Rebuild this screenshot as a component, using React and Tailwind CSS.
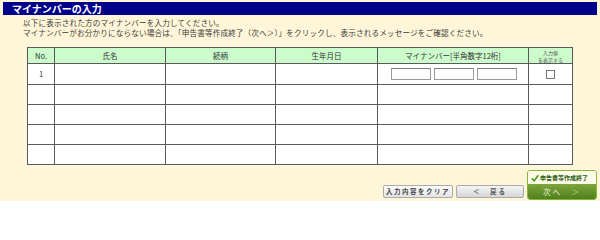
import React from "react";

const font = { fontFamily: '"Noto Sans CJK JP", "Noto Sans", sans-serif' };

function NumberInput() {
  return <input type="text" className="w-[40px] h-[12px] bg-white border border-[#9a9a9a] border-t-[#7a7a7a] outline-none" />;
}

export default function App() {
  const rows = [1, 2, 3, 4, 5];

  return (
    <div className="w-[600px] h-[201px] bg-[#fff6d9] text-[#333] overflow-hidden" style={font}>
      <div className="pt-[2px] px-[3px]">
        <div className="h-[13px] bg-[#00008b] text-white text-[10px] font-bold leading-[13px] pl-[9px]">
          マイナンバーの入力
        </div>
      </div>

      <div className="pl-[23px] mt-[3px] text-[7.6px] leading-[9.5px] tracking-[0.15px] text-[#3a3a3a]">
        <p>以下に表示された方のマイナンバーを入力してください。</p>
        <p>マイナンバーがお分かりにならない場合は、「申告書等作成終了（次へ＞）」をクリックし、表示されるメッセージをご確認ください。</p>
      </div>

      <table className="ml-[27px] mt-[10px] w-[545px] border-collapse table-fixed bg-white text-[7.5px] text-[#333]">
        <colgroup>
          <col className="w-[27px]" />
          <col className="w-[111px]" />
          <col className="w-[110px]" />
          <col className="w-[102px]" />
          <col className="w-[151px]" />
          <col className="w-[44px]" />
        </colgroup>
        <thead>
          <tr className="h-[16px] bg-[#ccfccc]">
            <th className="border border-[#5a5a5a] font-normal">No.</th>
            <th className="border border-[#5a5a5a] font-normal">氏名</th>
            <th className="border border-[#5a5a5a] font-normal">続柄</th>
            <th className="border border-[#5a5a5a] font-normal">生年月日</th>
            <th className="border border-[#5a5a5a] font-normal">マイナンバー[半角数字12桁]</th>
            <th className="border border-[#5a5a5a] font-normal text-[5px] leading-[7px] text-[#555] p-0">
              <div>入力値</div>
              <div>を表示する</div>
            </th>
          </tr>
        </thead>
        <tbody>
          {rows.map((n) => (
            <tr key={n} className={n === 1 ? "h-[21px]" : "h-[20px]"}>
              <td className="border border-[#5a5a5a] text-center">{n === 1 ? "1" : ""}</td>
              <td className="border border-[#5a5a5a]"></td>
              <td className="border border-[#5a5a5a]"></td>
              <td className="border border-[#5a5a5a]"></td>
              <td className="border border-[#5a5a5a]">
                {n === 1 && (
                  <div className="flex justify-center gap-[3px] pl-[2px]">
                    <NumberInput />
                    <NumberInput />
                    <NumberInput />
                  </div>
                )}
              </td>
              <td className="border border-[#5a5a5a]">
                {n === 1 && (
                  <div className="flex justify-center">
                    <span className="block w-[9px] h-[9px] border border-[#777] bg-white"></span>
                  </div>
                )}
              </td>
            </tr>
          ))}
        </tbody>
      </table>

      <div className="flex justify-end items-end gap-[3px] pr-[3px] mt-[5px]">
        <button className="w-[70px] h-[13px] mb-[2px] rounded-[2px] border border-[#aaa] bg-gradient-to-b from-white to-[#e2e2e2] text-[6.5px] font-bold text-[#444] tracking-[1.5px] leading-[11px]">
          入力内容をクリア
        </button>
        <button className="w-[68px] h-[13px] mb-[2px] rounded-[2px] border border-[#aaa] bg-gradient-to-b from-[#f4f4f4] to-[#d6d6d6] text-[6.5px] font-bold text-[#555] tracking-[2px] leading-[11px]">
          ＜　戻る
        </button>
        <div className="w-[70px] h-[30px] rounded-[3px] border border-[#8ab33a] overflow-hidden flex flex-col">
          <div className="h-[13px] bg-[#fbfbe8] flex items-center pl-[3px] gap-[1px] text-[6px] font-bold text-[#2f5d10] leading-none">
            <svg width="8" height="8" viewBox="0 0 10 10">
              <path d="M1 5.5 L4 8.5 L9 1.5" fill="none" stroke="#4e9a1e" strokeWidth="2" />
            </svg>
            申告書等作成終了
          </div>
          <div className="flex-1 bg-gradient-to-b from-[#7ea63a] to-[#4f7f1e] flex items-center justify-center text-[7.5px] text-[#eef5dc] tracking-[2px] leading-none">
            次へ　<span className="text-[#b9d38a]">＞</span>
          </div>
        </div>
      </div>
    </div>
  );
}
